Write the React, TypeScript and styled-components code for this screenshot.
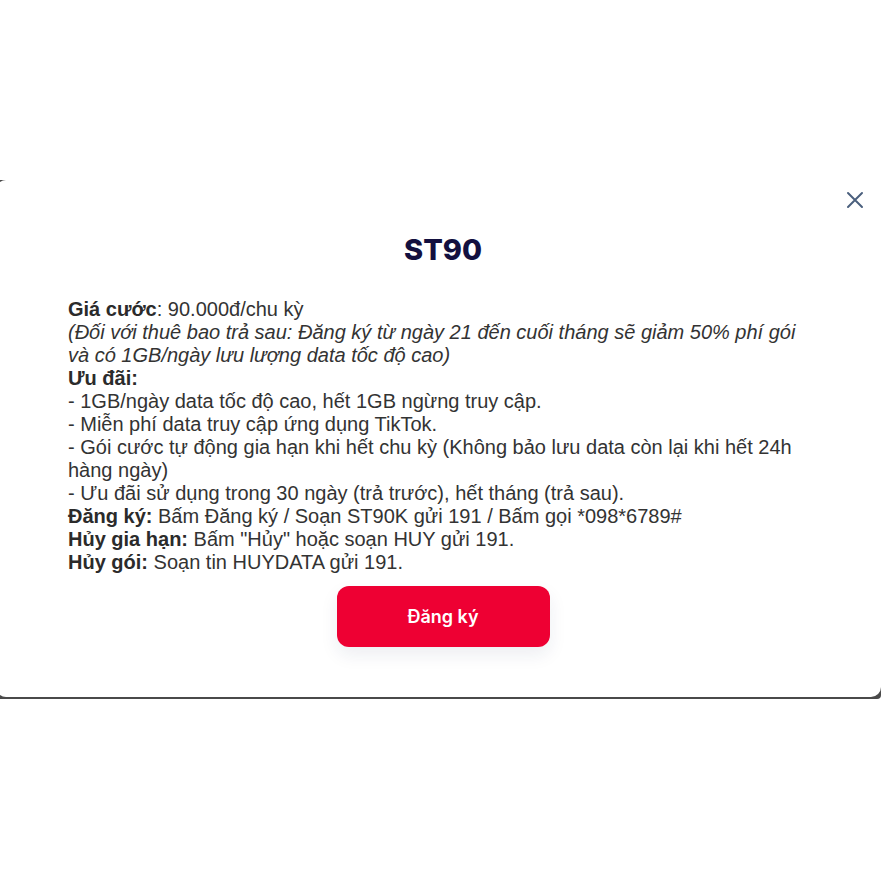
import React from 'react';
import styled, { createGlobalStyle } from 'styled-components';

const GlobalStyle = createGlobalStyle`
  html, body {
    margin: 0;
    padding: 0;
    background: #ffffff;
  }
  body {
    font-family: 'Liberation Sans', Arial, sans-serif;
    overflow: hidden;
  }
`;

const Page = styled.div`
  width: 881px;
  height: 881px;
  padding-top: 180px;
  box-sizing: border-box;
  overflow: hidden;
`;

const Backdrop = styled.div`
  margin-left: -4px;
  width: 885px;
  padding-bottom: 2px;
  background: #4a4a4a;
  border-radius: 0 0 4px 0;
`;

const Modal = styled.div`
  position: relative;
  background: #ffffff;
  border-radius: 10px 0 10px 10px;
  padding: 52px 63px 50px 72px;
`;

const CloseButton = styled.button`
  position: absolute;
  top: 8px;
  right: 14px;
  width: 24px;
  height: 24px;
  padding: 0;
  border: none;
  background: transparent;
  display: flex;
  align-items: center;
  justify-content: center;
  cursor: pointer;
`;

const Title = styled.h2`
  margin: 0;
  text-align: center;
  font-family: Inter, 'Noto Sans', sans-serif;
  font-weight: 800;
  font-size: 29px;
  line-height: 36px;
  color: #13103f;
`;

const Body = styled.div`
  max-width: 740px;
  margin-top: 30px;
  font-size: 20px;
  line-height: 23px;
  color: #333333;
`;

const Line = styled.div<{ italic?: boolean }>`
  font-style: ${(p) => (p.italic ? 'italic' : 'normal')};
`;

const Label = styled.b`
  font-weight: 700;
  color: #2b2b2b;
`;

const Actions = styled.div`
  display: flex;
  justify-content: center;
  margin-top: 12px;
`;

const RegisterButton = styled.button`
  width: 213px;
  height: 61px;
  border: none;
  border-radius: 12px;
  background: #ee0033;
  color: #ffffff;
  font-family: Inter, 'Noto Sans', sans-serif;
  font-weight: 600;
  font-size: 18px;
  box-shadow: 0 8px 18px rgba(30, 40, 90, 0.08);
  cursor: pointer;
`;

const perks = [
  '- 1GB/ngày data tốc độ cao, hết 1GB ngừng truy cập.',
  '- Miễn phí data truy cập ứng dụng TikTok.',
  '- Gói cước tự động gia hạn khi hết chu kỳ (Không bảo lưu data còn lại khi hết 24h hàng ngày)',
  '- Ưu đãi sử dụng trong 30 ngày (trả trước), hết tháng (trả sau).',
];

export default function App() {
  return (
    <>
      <GlobalStyle />
      <Page>
        <Backdrop>
          <Modal>
            <CloseButton aria-label="Đóng">
              <svg width="18" height="18" viewBox="0 0 18 18">
                <path
                  d="M2 2 L16 16 M16 2 L2 16"
                  stroke="#4b607e"
                  strokeWidth="2"
                  strokeLinecap="round"
                />
              </svg>
            </CloseButton>
            <Title>ST90</Title>
            <Body>
              <Line>
                <Label>Giá cước</Label>: 90.000đ/chu kỳ
              </Line>
              <Line italic>
                (Đối với thuê bao trả sau: Đăng ký từ ngày 21 đến cuối tháng sẽ giảm 50% phí gói
                và có 1GB/ngày lưu lượng data tốc độ cao)
              </Line>
              <Line>
                <Label>Ưu đãi:</Label>
              </Line>
              {perks.map((perk) => (
                <Line key={perk}>{perk}</Line>
              ))}
              <Line>
                <Label>Đăng ký:</Label> Bấm Đăng ký / Soạn ST90K gửi 191 / Bấm gọi *098*6789#
              </Line>
              <Line>
                <Label>Hủy gia hạn:</Label> Bấm "Hủy" hoặc soạn HUY gửi 191.
              </Line>
              <Line>
                <Label>Hủy gói:</Label> Soạn tin HUYDATA gửi 191.
              </Line>
            </Body>
            <Actions>
              <RegisterButton>Đăng ký</RegisterButton>
            </Actions>
          </Modal>
        </Backdrop>
      </Page>
    </>
  );
}
